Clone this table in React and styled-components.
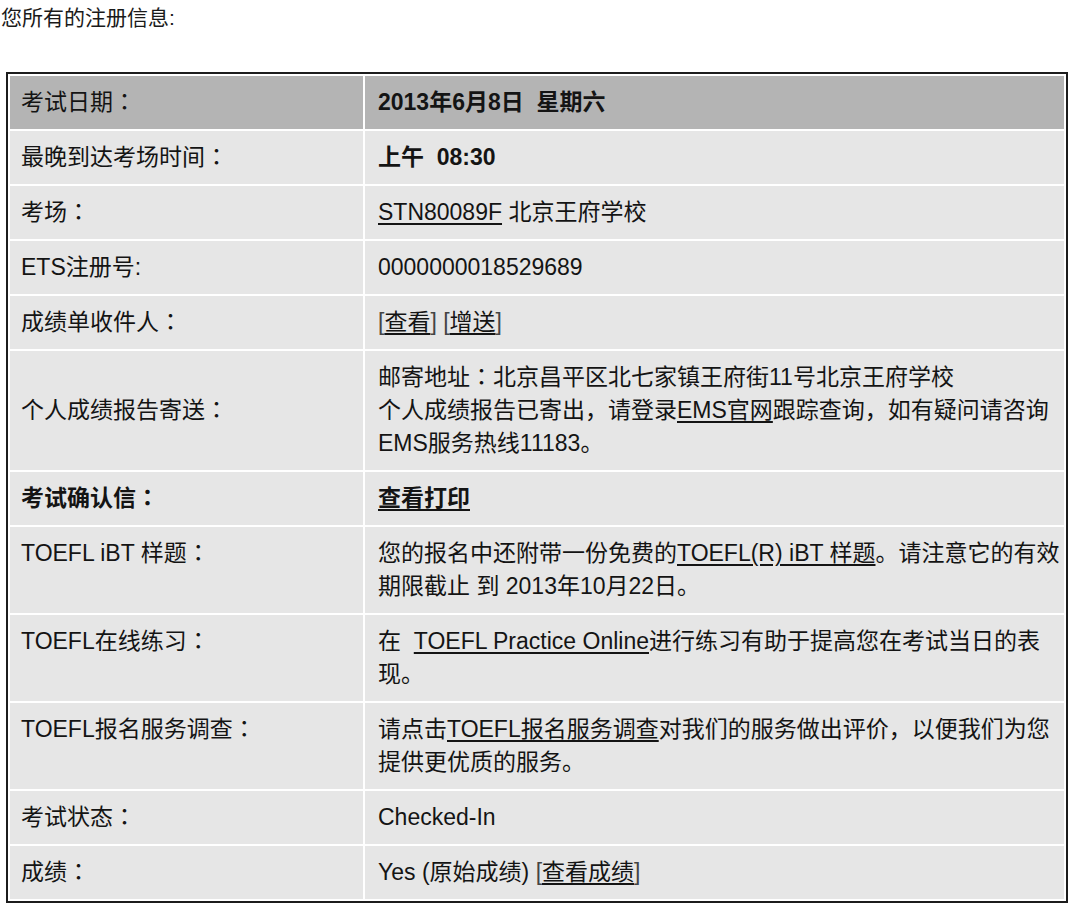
import React from "react";
import styled, { createGlobalStyle } from "styled-components";

const Global = createGlobalStyle`
  html, body { margin: 0; padding: 0; background: #fff; }
  body {
    font-family: "Liberation Sans", Arial, "Noto Sans CJK SC", sans-serif;
    color: #141414;
  }
`;

const Page = styled.div`
  width: 1075px;
  padding: 6px 0 0 0;
`;

const Title = styled.div`
  font-size: 21px;
  line-height: 24px;
  padding-left: 1px;
  color: #1a1a1a;
`;

const Table = styled.table`
  margin: 42px 0 0 6px;
  width: 1062px;
  border: 2px solid #1c1c1c;
  border-collapse: separate;
  border-spacing: 2px;
  background: #fff;
  font-size: 23px;
`;

const Row = styled.tr`
  background: ${(p) => (p.$head ? "#b4b4b4" : "#e6e6e6")};
`;

const Label = styled.td`
  width: 330px;
  padding: 10px 12px 10px 11px;
  line-height: 33px;
  white-space: nowrap;
  vertical-align: ${(p) => (p.$top ? "top" : "middle")};
  font-weight: ${(p) => (p.$bold ? 700 : 400)};
`;

const Value = styled.td`
  padding: 10px 0 10px 13px;
  line-height: 33px;
  white-space: nowrap;
  vertical-align: middle;
  font-weight: ${(p) => (p.$bold ? 700 : 400)};
`;

const Link = styled.a`
  color: inherit;
  text-decoration: underline;
  text-decoration-thickness: 2px;
  text-underline-offset: 3px;
  cursor: pointer;
`;

const Bracket = styled.span`
  color: #444;
`;

const Colon = styled.span`
  font-family: "Noto Sans CJK TC", sans-serif;
  line-height: 0;
`;

const withColon = (text) => {
  const parts = text.split("：");
  return parts.map((p, i) => (
    <React.Fragment key={i}>
      {p}
      {i < parts.length - 1 && <Colon>：</Colon>}
    </React.Fragment>
  ));
};

const rows = [
  { label: "考试日期：", head: true, value: <b>2013年6月8日&nbsp; 星期六</b> },
  { label: "最晚到达考场时间：", value: <b>上午&nbsp; 08:30</b> },
  { label: "考场：", value: <><Link>STN80089F</Link> 北京王府学校</> },
  { label: "ETS注册号:", value: "0000000018529689" },
  {
    label: "成绩单收件人：",
    value: (
      <>
        <Bracket>[</Bracket><Link>查看</Link><Bracket>]</Bracket> <Bracket>[</Bracket><Link>增送</Link><Bracket>]</Bracket>
      </>
    ),
  },
  {
    label: "个人成绩报告寄送：",
    value: (
      <>
        邮寄地址<Colon>：</Colon>北京昌平区北七家镇王府街11号北京王府学校
        <br />
        个人成绩报告已寄出，请登录<Link>EMS官网</Link>跟踪查询，如有疑问请咨询
        <br />
        EMS服务热线11183。
      </>
    ),
  },
  { label: "考试确认信：", boldLabel: true, boldValue: true, value: <Link>查看打印</Link> },
  {
    label: "TOEFL iBT 样题：",
    top: true,
    value: (
      <>
        您的报名中还附带一份免费的<Link>TOEFL(R) iBT 样题</Link>。请注意它的有效
        <br />
        期限截止 到 2013年10月22日。
      </>
    ),
  },
  {
    label: "TOEFL在线练习：",
    top: true,
    value: (
      <>
        在&nbsp; <Link>TOEFL Practice Online</Link>进行练习有助于提高您在考试当日的表
        <br />
        现。
      </>
    ),
  },
  {
    label: "TOEFL报名服务调查：",
    top: true,
    value: (
      <>
        请点击<Link>TOEFL报名服务调查</Link>对我们的服务做出评价，以便我们为您
        <br />
        提供更优质的服务。
      </>
    ),
  },
  { label: "考试状态：", value: "Checked-In" },
  {
    label: "成绩：",
    value: (
      <>
        Yes (原始成绩) <Bracket>[</Bracket><Link>查看成绩</Link><Bracket>]</Bracket>
      </>
    ),
  },
];

export default function App() {
  return (
    <>
      <Global />
      <Page>
        <Title>您所有的注册信息:</Title>
        <Table>
          <tbody>
            {rows.map((r, i) => (
              <Row key={i} $head={r.head}>
                <Label $top={r.top} $bold={r.boldLabel}>{withColon(r.label)}</Label>
                <Value $bold={r.boldValue}>{r.value}</Value>
              </Row>
            ))}
          </tbody>
        </Table>
      </Page>
    </>
  );
}
